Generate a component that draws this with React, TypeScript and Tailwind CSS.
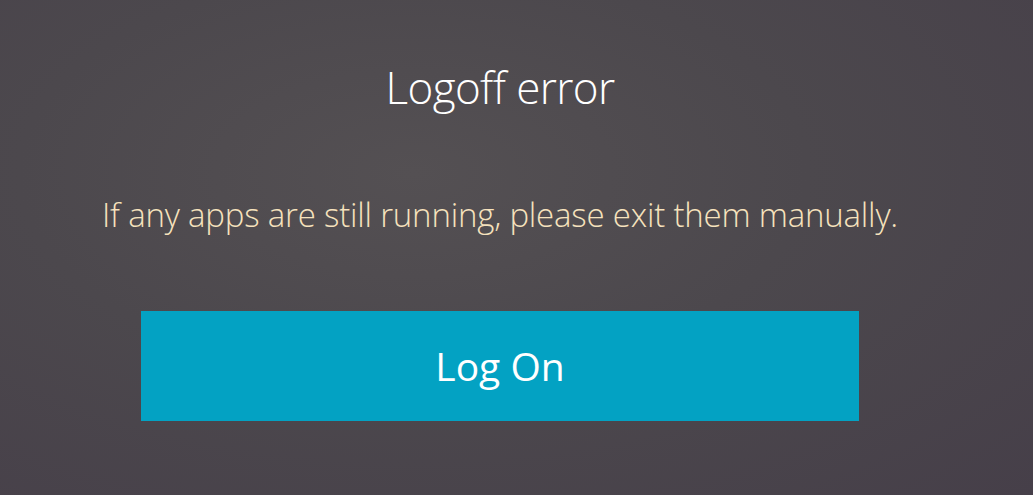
export default function App() {
  return (
    <div className="w-[1033px] h-[495px] overflow-hidden bg-[radial-gradient(ellipse_at_40%_35%,#545053_0%,#4c484d_45%,#463f49_100%)] font-['Open_Sans',sans-serif]">
      <div className="w-[1000px] flex flex-col items-center">
        <h1 className="mt-[57px] text-[44px] leading-[60px] font-light text-white tracking-[-0.6px]">Logoff error</h1>
        <p className="mt-[76px] text-[33px] leading-[44px] font-light text-[#f6e2bd] tracking-[-0.2px]">If any apps are still running, please exit them manually.</p>
        <button className="mt-[74px] w-[718px] h-[110px] bg-[#03a2c3] text-white text-[39px] font-normal">Log On</button>
      </div>
    </div>
  );
}
